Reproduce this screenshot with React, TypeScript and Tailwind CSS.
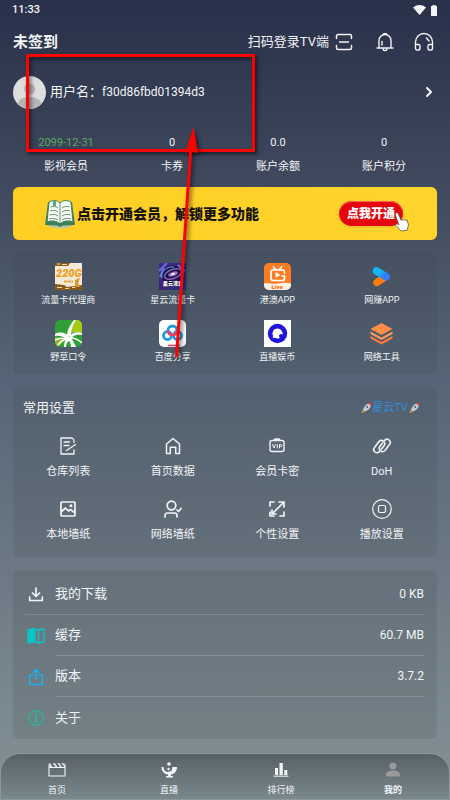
import React from "react";
import { ChevronRight } from "lucide-react";

type Item = { label: string; icon: React.ReactNode };

const stats = [
  { label: "影视会员", value: "2099-12-31", color: "text-[#5aa860]" },
  { label: "卡券", value: "0", color: "text-gray-100" },
  { label: "账户余额", value: "0.0", color: "text-gray-100" },
  { label: "账户积分", value: "0", color: "text-gray-100" },
];

const svgProps = {
  fill: "none",
  stroke: "currentColor",
  strokeWidth: 1.5,
  strokeLinecap: "round" as const,
  strokeLinejoin: "round" as const,
  "aria-hidden": true,
};

function TrafficCardIcon() {
  return (
    <svg viewBox="0 0 27 27" className="size-[27px]" aria-hidden>
      <rect width="27" height="27" fill="#f5ead8" />
      <path d="M0 0h15l-2 3H0zM0 21l9 1 3 2 15-2v5H0z" fill="#8a5a1c" />
      <path d="M2 1h3M7 1.500h5M2 24.500h5M10 25.500h4M17 24.500h3" stroke="#f5d9a0" />
      <path d="M20 17l5-2-2 5 2 4h-5z" fill="#d59a2b" />
      <path d="M9 18.500h9" stroke="#e9a13b" strokeWidth="2" strokeDasharray="2 .5" />
      <text x="1" y="14" fontSize="11" fontWeight="900" fontStyle="italic" fill="#f2a01c" fontFamily="Roboto, sans-serif">
        220G
      </text>
    </svg>
  );
}

function GalaxyIcon() {
  return (
    <svg viewBox="0 0 27 27" className="size-[27px]" aria-hidden>
      <defs>
        <linearGradient id="galaxy" x1="0" y1="0" x2="1" y2="1">
          <stop offset="0" stopColor="#3b2f93" />
          <stop offset=".5" stopColor="#40226f" />
          <stop offset="1" stopColor="#1c3f93" />
        </linearGradient>
      </defs>
      <rect width="27" height="27" fill="url(#galaxy)" />
      <path d="M0 8L8 0M1 14L5 5M19 2l7 6" stroke="#6e6bdc" strokeWidth="2" />
      <circle cx="13.500" cy="13" r="10.500" fill="#1b1446" />
      <g transform="rotate(-20 14 11)">
        <ellipse cx="14" cy="11" rx="9" ry="4.500" fill="none" stroke="#8d5fc2" strokeWidth="1.500" />
        <ellipse cx="14" cy="11" rx="5" ry="2.200" fill="#9b6ecf" />
        <ellipse cx="14" cy="11" rx="2" ry="1" fill="#fff" />
      </g>
      <path d="M3 15C1 9 8 3 15 4" stroke="#50b8e8" fill="none" />
      <text x="4" y="22" fontSize="5" fontWeight="900" fill="#fff" fontFamily="'Noto Sans CJK SC', sans-serif">
        星云流量
      </text>
    </svg>
  );
}

function LiveIcon() {
  return (
    <svg viewBox="0 0 27 27" className="size-[27px]" aria-hidden>
      <rect width="27" height="27" rx="5" fill="#ff7d22" />
      <path d="M0 20.500c5-1 8 1 14 0s9-1 13 0V22a5 5 0 0 1-5 5H5a5 5 0 0 1-5-5z" fill="#fff2e8" />
      <path d="M9.500 4l2 2.500M17.500 4l-2 2.500M20.500 10V9a2 2 0 0 0-2-2H9a2 2 0 0 0-2 2v6.500a2 2 0 0 0 2 2h9.500a2 2 0 0 0 2-2v-2.500H18" stroke="#fff" strokeWidth="1.700" fill="none" strokeLinecap="round" />
      <path d="M11.500 9v6l5-3z" fill="#fff" />
      <text x="7.500" y="26" fontSize="6" fontWeight="900" fill="#ff6a16" fontFamily="Roboto, sans-serif">
        Live
      </text>
    </svg>
  );
}

function EarnIcon() {
  return (
    <svg viewBox="0 0 27 27" className="size-[27px]" aria-hidden>
      <defs>
        <linearGradient id="earn" x1="0" y1="0" x2="1" y2=".6">
          <stop offset=".3" stopColor="#12baf5" />
          <stop offset="1" stopColor="#337cff" />
        </linearGradient>
      </defs>
      <path d="M8.800 19.500l7-4.500" stroke="#ff7e0a" strokeWidth="7" strokeLinecap="round" />
      <path d="M8.500 8l9.500 5.800" stroke="url(#earn)" strokeWidth="7.500" strokeLinecap="round" />
    </svg>
  );
}

function WeedIcon() {
  return (
    <svg viewBox="0 0 27 27" className="size-[27px]" aria-hidden>
      <defs>
        <clipPath id="weed">
          <rect width="27" height="27" rx="5" />
        </clipPath>
      </defs>
      <g clipPath="url(#weed)">
        <rect width="27" height="27" fill="#2fa037" />
        <path d="M19 0h8v14c-4-2-8-2-12-1z" fill="#a5ca18" />
        <path d="M0 17l11 2-8 8H0z" fill="#8cbd26" />
        <path d="M0 14c5-3 12-1 14 3 2-4 8-6 13-4v2c-6-1-10 1-10 4 1 3 3 5 4 8h-5c0-3-1-5-2-6-2 1-3 3-3 6H9c0-4 1-6 2-8-3-3-7-4-11-3z" fill="#fff" />
        <path d="M12 16c0-6 3-11 7-16h2c-4 6-5 11-5 16z" fill="#fff" />
        <path d="M0 20c4-2 8-2 11-1-3 1-6 3-8 6M16 18c4 0 8 2 11 5" stroke="#fff" strokeWidth="1.500" fill="none" />
      </g>
    </svg>
  );
}

function BaiduIcon() {
  return (
    <svg viewBox="0 0 27 27" className="size-[27px]" aria-hidden>
      <rect width="27" height="27" rx="5" fill="#fff" />
      <g fill="none" strokeWidth="2.800">
        <circle cx="8.500" cy="15.500" r="4" stroke="#209bea" />
        <circle cx="18.500" cy="15.500" r="4" stroke="#209bea" />
        <path d="M9 10.500a4.500 4.500 0 0 1 9 0" stroke="#209bea" />
        <path d="M9 10.500a4.500 4.500 0 0 0 9 0" stroke="#ee4059" />
      </g>
      <path d="M9 25.500h8" stroke="#ee4059" strokeWidth="1.500" />
      <path d="M17 25.500h4" stroke="#209bea" strokeWidth="1.500" />
    </svg>
  );
}

function CoinIcon() {
  return (
    <svg viewBox="0 0 27 27" className="size-[27px]" aria-hidden>
      <rect width="27" height="27" fill="#fff" />
      <circle cx="13.500" cy="13.500" r="9.700" fill="#2114dd" />
      <path d="M13.500 8.500a5 5 0 1 1-2.500 9.300c-1-.1-1.800.1-2.500.5.500-.8.700-1.600.5-2.500a5 5 0 0 1 4.500-7.300z" fill="#fff" />
      <circle cx="17" cy="16" r="2" fill="#2114dd" />
    </svg>
  );
}

function ToolsIcon() {
  return (
    <svg viewBox="0 0 27 27" className="size-[27px]" aria-hidden>
      <path d="M13.500 3L24.500 9l-11 6-11-6z" fill="#ff8d45" />
      <path d="M2.500 11.500l11 6 11-6v2.500l-11 6-11-6z" fill="#ff9a5c" />
      <path d="M2.500 16l11 6 11-6v2.500l-11 6-11-6z" fill="#ff7a35" />
    </svg>
  );
}

const apps: Item[] = [
  { label: "流量卡代理商", icon: <TrafficCardIcon /> },
  { label: "星云流量卡", icon: <GalaxyIcon /> },
  { label: "港澳APP", icon: <LiveIcon /> },
  { label: "网赚APP", icon: <EarnIcon /> },
  { label: "野草口令", icon: <WeedIcon /> },
  { label: "百度分享", icon: <BaiduIcon /> },
  { label: "直播娱币", icon: <CoinIcon /> },
  { label: "网络工具", icon: <ToolsIcon /> },
];

const settings: Item[] = [
  {
    label: "仓库列表",
    icon: (
      <svg {...svgProps} viewBox="0 0 20 20" className="size-5" strokeWidth={1.3}>
        <path d="M16 6.500V5a3 3 0 0 0-3-3H3v16h13v-4M6 6h5.500M6 9.500h5M8.500 14.500L17.500 8.500" />
      </svg>
    ),
  },
  {
    label: "首页数据",
    icon: (
      <svg {...svgProps} viewBox="0 0 20 20" className="size-5" strokeWidth={1.5}>
        <path d="M3.500 8L10 2.500 16.500 8v9.500h-3.800v-6.300H7.300v6.300H3.500z" />
      </svg>
    ),
  },
  {
    label: "会员卡密",
    icon: (
      <svg {...svgProps} viewBox="0 0 20 20" className="size-5" strokeWidth={1.4}>
        <rect x="3" y="4.500" width="14" height="11" rx="2" />
        <path d="M7 4.500l.8-1.500h4.400l.8 1.500" fill="currentColor" />
        <path d="M5.500 8.500L7 12l1.500-3.500M10.300 8.500V12M12.500 12V8.500h1.300a1 1 0 0 1 0 2h-1.300" strokeWidth="1" />
      </svg>
    ),
  },
  {
    label: "DoH",
    icon: (
      <svg {...svgProps} viewBox="0 0 20 20" className="size-5" strokeWidth={1.6}>
        <path d="M7.500 15.500a3.200 3.200 0 0 1-5-4l4.500-6a3.300 3.300 0 0 1 5.200 4L9.500 13" />
        <path d="M12.500 4.500a3.200 3.200 0 0 1 5 4l-4.500 6a3.300 3.300 0 0 1-5.200-4L10.500 7" />
      </svg>
    ),
  },
  {
    label: "本地墙纸",
    icon: (
      <svg {...svgProps} viewBox="0 0 20 20" className="size-5" strokeWidth={1.7}>
        <rect x="3" y="3" width="14" height="14" rx="1" />
        <path d="M3.500 12.500L7.500 9l3 3 2-1.500 4 3" />
        <circle cx="13" cy="6.800" r=".7" fill="currentColor" />
      </svg>
    ),
  },
  {
    label: "网络墙纸",
    icon: (
      <svg {...svgProps} viewBox="0 0 20 20" className="size-5" strokeWidth={1.7}>
        <circle cx="8.500" cy="6.500" r="4.300" />
        <path d="M2 18v-1.500a2.500 2.500 0 0 1 2.500-2.500h7a2.500 2.500 0 0 1 2.500 2.500V18M14 11l1.500 1.500 2.500-3" />
      </svg>
    ),
  },
  {
    label: "个性设置",
    icon: (
      <svg {...svgProps} viewBox="0 0 20 20" className="size-5" strokeWidth={1.7}>
        <path d="M7 3H3v4M3 13v4h4M13 17h4v-4M12 3h5v5M17 3L5 15M5 11v4h4" />
      </svg>
    ),
  },
  {
    label: "播放设置",
    icon: (
      <svg {...svgProps} viewBox="0 0 20 20" className="size-5" strokeWidth={1.2}>
        <circle cx="10" cy="10" r="9.300" />
        <rect x="6.500" y="6.500" width="7" height="7" rx="1.500" />
      </svg>
    ),
  },
];

const rows: (Item & { value?: string })[] = [
  {
    label: "我的下载",
    value: "0 KB",
    icon: (
      <svg {...svgProps} viewBox="0 0 18 18" className="size-[18px]" strokeWidth={1.7}>
        <path d="M9 3v8M5.500 8L9 11.500 12.500 8M2.700 12v3.500h12.600V12" />
      </svg>
    ),
  },
  {
    label: "缓存",
    value: "60.7 MB",
    icon: (
      <svg {...svgProps} viewBox="0 0 18 18" className="size-[18px] text-[#09c5c7]" strokeWidth={1.3}>
        <path d="M1 3l5.500-1.300v13L1 16z" fill="currentColor" />
        <path d="M6.500 1.700l5 1.300 5.500-1v12.500L11.500 16l-5-1.300zM11.500 3v13" />
        <path d="M6.500 2L8 2.300v12.800l-1.500-.4z" fill="currentColor" />
      </svg>
    ),
  },
  {
    label: "版本",
    value: "3.7.2",
    icon: (
      <svg {...svgProps} viewBox="0 0 18 18" className="size-[18px] text-[#17b1ef]">
        <path d="M6 7H2.700v9.500h12.600V7H12M9 11V1.500M6 4.500l3-3 3 3" />
      </svg>
    ),
  },
  {
    label: "关于",
    icon: (
      <svg {...svgProps} viewBox="0 0 18 18" className="size-[18px] text-[#1fbd96]" strokeWidth={1.2}>
        <circle cx="9" cy="9" r="7.300" />
        <circle cx="9.500" cy="5.300" r=".6" fill="currentColor" />
        <path d="M7.500 8h2l-1 5h2M7.500 13h1" strokeWidth="1.500" />
      </svg>
    ),
  },
];

const tabs: (Item & { active?: boolean })[] = [
  {
    label: "首页",
    icon: (
      <svg {...svgProps} viewBox="0 0 18 18" className="size-[18px]" strokeWidth={1.1}>
        <path d="M1 6.500h16v8.500H1zM1 6V3M17 6V3" />
        <path d="M2 2.500l2 3.500H2zM5.500 2.500H7L9 6H8zM10 2.500h1.500l2 3.500h-1zM14 2.500h1.500L17 6z" fill="currentColor" strokeWidth=".5" />
      </svg>
    ),
  },
  {
    label: "直播",
    icon: (
      <svg viewBox="0 0 18 18" className="size-[18px]" fill="currentColor" aria-hidden>
        <path d="M1.500 6h2c.2 3 1.500 4.500 4 5l4-1 1-4H17c0 4-2.500 7-6 7.500v1.500h2v1.500H6V15h2v-1.500C4 13 1.500 10 1.500 6z" />
        <circle cx="9" cy="3" r="1.800" />
        <circle cx="8.500" cy="8" r="1.200" />
      </svg>
    ),
  },
  {
    label: "排行榜",
    icon: (
      <svg viewBox="0 0 18 18" className="size-[18px]" fill="currentColor" aria-hidden>
        <path d="M3 7h3v7H3zM7.500 2h3.300v12H7.500zM12.300 9h3v5h-3z" />
        <path d="M1.500 14.500h15V16h-15z" opacity=".7" />
      </svg>
    ),
  },
  {
    label: "我的",
    active: true,
    icon: (
      <svg viewBox="0 0 18 18" className="size-[18px] text-[#9b9a9b]" fill="currentColor" aria-hidden>
        <circle cx="9" cy="5" r="3.500" />
        <path d="M2 15.500V14c0-3 3-4.500 7-4.500s7 1.500 7 4.500v1.500z" />
      </svg>
    ),
  },
];

function Rocket() {
  return (
    <svg viewBox="0 0 12 12" className="size-3" aria-hidden>
      <path d="M1 11.500l3.500-2L3 8z" fill="#f2a01c" />
      <path d="M2 8l3-3 2.500 3-3 2z" fill="#8d6a50" />
      <path d="M3 8.500C3.500 5 6 2 9 1.500l2 2C10 6.500 7.500 9 4.500 9.500z" fill="#c3ccd2" />
      <path d="M8 1.300L11.500.5 11 4z" fill="#e0442f" />
      <circle cx="7.200" cy="4.900" r="1" fill="#4d5d69" />
    </svg>
  );
}

function StatusBar() {
  return (
    <div className="flex h-5 items-center justify-between px-3">
      <span className="text-[11px] font-medium leading-4">11:33</span>
      <div className="flex items-center gap-1">
        <svg viewBox="0 0 13 10" className="h-[10px] w-[13px]" fill="currentColor" aria-hidden>
          <path d="M0 2.500C4 -.8 9 -.8 13 2.500L6.500 10z" />
        </svg>
        <svg viewBox="0 0 8 11" className="h-[11px] w-2" fill="currentColor" aria-hidden>
          <path d="M2.500 0h3v1H7v10H1V1h1.500z" />
        </svg>
      </div>
    </div>
  );
}

function Header() {
  return (
    <header className="flex h-11 items-center justify-between pl-[13px] pr-4">
      <h1 className="text-[15px] font-bold leading-5">未签到</h1>
      <div className="flex items-center">
        <button className="flex items-center gap-[6px] text-[13px] leading-5">
          扫码登录TV端
          <svg {...svgProps} viewBox="0 0 18 18" className="size-[18px]">
            <path d="M1.500 5.500V3a1.500 1.500 0 0 1 1.500-1.500h12A1.500 1.500 0 0 1 16.500 3v2.500M1.500 12.500V15A1.500 1.500 0 0 0 3 16.500h12a1.500 1.500 0 0 0 1.500-1.500v-2.500M4.500 9h9" />
          </svg>
        </button>
        <button aria-label="消息" className="ml-[23px]">
          <svg {...svgProps} viewBox="0 0 18 20" className="h-5 w-[18px]" strokeWidth={1.4}>
            <path d="M3 16V8.500a6 6 0 0 1 12 0V16M1 16h16M7.500 1.700h3M7 17c.5 2.200 3.500 2.200 4 0M6 13V9.500" />
          </svg>
        </button>
        <button aria-label="客服" className="ml-5">
          <svg {...svgProps} viewBox="0 0 20 20" className="size-5" strokeWidth={1.4}>
            <path d="M1.500 13.500V10a8.500 8.500 0 0 1 17 0v3.500M1.500 12.500h3a1.500 1.500 0 0 1 1.500 1.500v2.500A1.500 1.500 0 0 1 4.500 18H3a1.500 1.500 0 0 1-1.500-1.500zM18.500 12.500h-3A1.500 1.500 0 0 0 14 14v2.500a1.500 1.500 0 0 0 1.500 1.500H17a1.500 1.500 0 0 0 1.500-1.500zM12.500 6l2.500 3" />
          </svg>
        </button>
      </div>
    </header>
  );
}

function Profile() {
  return (
    <section className="px-[13px]">
      <button className="flex h-14 w-full items-center text-[13px]">
        <svg viewBox="0 0 33 33" className="size-[33px]" aria-hidden>
          <defs>
            <clipPath id="avatar">
              <circle cx="16.500" cy="16.500" r="16.500" />
            </clipPath>
          </defs>
          <g clipPath="url(#avatar)">
            <rect width="33" height="33" fill="#dedede" />
            <circle cx="16.500" cy="13" r="5.500" fill="#b6b6b6" />
            <path d="M5 33v-6c1-4 6-6 11.500-6S27 23 28 27v6z" fill="#b6b6b6" />
          </g>
        </svg>
        <span className="ml-1">用户名：</span>
        <span className="text-[12px]">f30d86fbd01394d3</span>
        <ChevronRight className="ml-auto size-4" strokeWidth={3} aria-hidden />
      </button>
      <dl className="grid grid-cols-4 pt-[15px] text-center text-[11px] leading-4">
        {stats.map((stat) => (
          <div key={stat.label} className="flex flex-col-reverse gap-2">
            <dt>{stat.label}</dt>
            <dd className={stat.color}>{stat.value}</dd>
          </div>
        ))}
      </dl>
    </section>
  );
}

function Banner() {
  return (
    <a
      href="#vip"
      className="mx-[13px] mt-3 flex h-[53px] items-center rounded-[6px] bg-linear-to-r from-[#ffce22] to-[#ffd42d] pl-[32px] pr-[34px] text-[#15120a]"
    >
      <svg viewBox="0 0 30 30" className="size-[30px] shrink-0" aria-hidden>
        <ellipse cx="15" cy="26" rx="12" ry="3.500" fill="#bfc5a0" />
        <path d="M3 3h24l3 23-12 .5-3 1.500-3-1.500L0 26z" fill="#3c7f58" />
        <path d="M4 3c4-2 8-2 11 1 3-3 7-3 11-1l2 20c-5-2-10-1-13 2-3-3-8-4-13-2z" fill="#f7faf3" stroke="#3c7f58" />
        <path d="M15 4v20M5.500 8c3-1 5-.8 7.500 1M5 12c3-1 6-.8 8 1M4.500 16c4-1 6-.8 8.500 1M4 20c4-1 6-.5 9 1M17 9c3-1.800 5-2 7.500-1M17 13c3-1.800 5-2 8-1M17 17c3-1.800 5-2 8.500-1M17 21c3-1.800 5-2 9-1" stroke="#629476" strokeWidth="1" fill="none" />
        <path d="M8 2v6l1.500-1.500L11 8V2z" fill="#5aa878" />
      </svg>
      <strong className="ml-[2px] whitespace-nowrap text-[14px] font-black leading-5">点击开通会员，解锁更多功能</strong>
      <span className="relative ml-auto flex h-[25px] items-center rounded-full bg-[#e6060d] px-2 text-[12px] font-black leading-4 text-white shadow-sm inset-shadow-[0_1px_1px_#ff6a5a]">
        点我开通
        <svg viewBox="0 0 15 20" className="absolute -bottom-1.5 -right-1.5 h-5 w-[15px]" aria-hidden>
          <path d="M1.500 1c1.500-.8 2.500 0 3 1.200l2.500 6 1-.7 1.500.8 1.200-.8 1.300 1 1.200-.3 1.300 5-1.500 5-6 .8-5-5.500c-.5-1.500 1-2 2-1.200l1 .7-3.700-10z" fill="#fff" stroke="#555" strokeWidth=".8" />
        </svg>
      </span>
    </a>
  );
}

function IconTile({ item, className }: { item: Item; className: string }) {
  return (
    <button className={`flex flex-col items-center ${className}`}>
      {item.icon}
      <span>{item.label}</span>
    </button>
  );
}

export default function App() {
  return (
    <div className="relative flex min-h-screen flex-col bg-[linear-gradient(#29304a,#3f485c_22%,#566577_48%,#6b7884_70%,#7f8d93_94%,#83908f)] font-['Roboto','Noto_Sans_CJK_SC',sans-serif] text-gray-100">
      <StatusBar />
      <Header />
      <Profile />
      <Banner />

      <section className="mx-[13px] mt-[13px] grid grid-cols-4 gap-y-[13px] rounded-[6px] bg-[#3c4640]/15 px-[3px] pb-[10px] pt-[10px]">
        {apps.map((item) => (
          <IconTile key={item.label} item={item} className="gap-[3px] text-[9px] leading-[14px]" />
        ))}
      </section>

      <section className="mx-[13px] mt-[13px] rounded-[6px] bg-[#3c4640]/15 px-[3px] pb-[14px] pt-[12px]">
        <div className="flex items-center justify-between pl-[7px] pr-[14px]">
          <h2 className="text-[13px] leading-[18px]">常用设置</h2>
          <a href="#tv" className="flex items-center text-[11px] leading-4 text-[#2c8fe0]">
            <Rocket />
            星云TV
            <Rocket />
          </a>
        </div>
        <div className="mt-[19px] grid grid-cols-4 gap-y-[19px]">
          {settings.map((item) => (
            <IconTile key={item.label} item={item} className="gap-2 text-[11px] leading-4" />
          ))}
        </div>
      </section>

      <section className="mx-[13px] mt-[13px] rounded-[6px] bg-[#3c4640]/15 pb-px pl-3 pr-3 pt-1">
        {rows.map((row, i) => (
          <button
            key={row.label}
            className={`flex w-full items-center text-left ${i === 0 ? "border-b border-white/15" : ""}`}
          >
            <span className="ml-[2px]">{row.icon}</span>
            <span
              className={`ml-[10px] flex flex-1 items-center justify-between pr-px ${
                i === 0 ? "h-10" : "h-[41px]"
              } ${i > 0 && i < rows.length - 1 ? "border-b border-white/15" : ""}`}
            >
              <span className="text-[13px]">{row.label}</span>
              <span className="text-[12px]">{row.value}</span>
            </span>
          </button>
        ))}
      </section>

      <div className="mt-auto pt-[14px]">
        <nav className="grid h-[47px] grid-cols-4 rounded-t-[20px] border border-[#8c989c] bg-linear-to-b from-[#596168] to-[#78888d]">
          {tabs.map((tab) => (
            <a
              key={tab.label}
              href="#tab"
              aria-current={tab.active ? "page" : undefined}
              className={`flex flex-col items-center gap-1 pt-[7px] text-[9px] leading-[14px] ${
                tab.active ? "font-bold" : ""
              }`}
            >
              {tab.icon}
              {tab.label}
            </a>
          ))}
        </nav>
      </div>

      {/* highlight box and pointer over the user info */}
      <div className="pointer-events-none absolute left-[26px] top-[54px] h-[98px] w-[229px] border-3 border-[#fe0000] shadow-[2px_2px_4px_rgba(0,0,0,0.6)] inset-shadow-[2px_2px_4px_rgba(0,0,0,0.5)]" />
      <svg
        viewBox="0 0 40 236"
        className="pointer-events-none absolute left-[165px] top-[124px] h-[236px] w-10 drop-shadow-[2px_2px_2px_rgba(0,0,0,0.6)]"
        aria-hidden
      >
        <path d="M10 233h3L27 28l6 1L28.500 3 20 29l4-1z" fill="#fe0000" />
      </svg>
    </div>
  );
}
